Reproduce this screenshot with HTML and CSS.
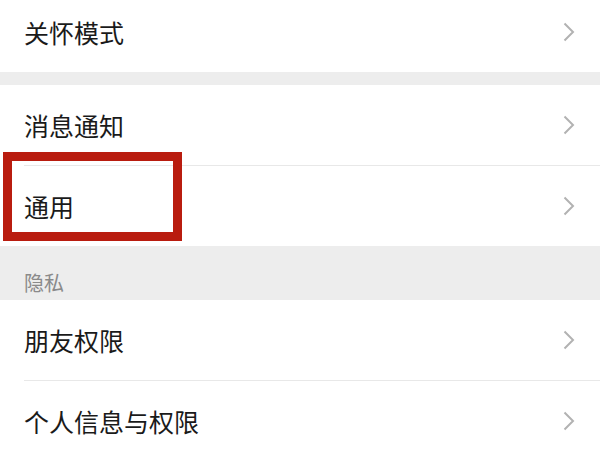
FILE: index.html
```html
<!DOCTYPE html>
<html lang="zh-CN">
<head>
  <meta charset="UTF-8">
  <meta name="viewport" content="width=device-width, initial-scale=1.0">
  <title>设置</title>
  <link rel="stylesheet" href="styles.css">
</head>
<body>
  <div class="settings">
    <div class="group">
      <div class="row">
        <div class="row-inner">
          <span class="label">关怀模式</span>
          <svg class="chevron" width="12" height="20" viewBox="0 0 12 20"><polyline points="1.5,1.5 10,10 1.5,18.5" /></svg>
        </div>
      </div>
    </div>

    <div class="gap"></div>

    <div class="group">
      <div class="row">
        <div class="row-inner">
          <span class="label">消息通知</span>
          <svg class="chevron" width="12" height="20" viewBox="0 0 12 20"><polyline points="1.5,1.5 10,10 1.5,18.5" /></svg>
        </div>
      </div>
      <div class="row">
        <div class="row-inner">
          <span class="label">通用</span>
          <svg class="chevron" width="12" height="20" viewBox="0 0 12 20"><polyline points="1.5,1.5 10,10 1.5,18.5" /></svg>
        </div>
      </div>
    </div>

    <div class="section-title">隐私</div>

    <div class="group">
      <div class="row">
        <div class="row-inner">
          <span class="label">朋友权限</span>
          <svg class="chevron" width="12" height="20" viewBox="0 0 12 20"><polyline points="1.5,1.5 10,10 1.5,18.5" /></svg>
        </div>
      </div>
      <div class="row">
        <div class="row-inner">
          <span class="label">个人信息与权限</span>
          <svg class="chevron" width="12" height="20" viewBox="0 0 12 20"><polyline points="1.5,1.5 10,10 1.5,18.5" /></svg>
        </div>
      </div>
    </div>

    <!-- highlight drawn over the "通用" row -->
    <div class="highlight"></div>
  </div>
</body>
</html>
```

FILE: styles.css
```css
body {
  margin: 0;
  background-color: #ededed;
  font-family: "Noto Sans CJK SC", "Noto Sans", sans-serif;
  overflow: hidden;
}
.settings {
  position: relative;
  margin-top: -8px;
}
.group {
  background-color: #ffffff;
}
.row {
  padding-left: 24px;
}
.row-inner {
  display: flex;
  align-items: center;
  justify-content: space-between;
  height: 80px;
  padding-right: 25px;
  border-bottom: 1px solid #e8e8e8;
}
.row:last-child .row-inner {
  border-bottom: none;
}
.label {
  font-size: 25px;
  line-height: 25px;
  color: #1a1a1a;
}
.chevron {
  display: block;
  fill: none;
  stroke: #b2b2b2;
  stroke-width: 2;
}
.gap {
  height: 13px;
}
.section-title {
  display: flex;
  align-items: flex-end;
  height: 54px;
  padding: 0 0 7px 24px;
  box-sizing: border-box;
  font-size: 20px;
  line-height: 20px;
  color: #8a8a8a;
}
.highlight {
  position: absolute;
  left: 3px;
  top: 160px;
  width: 179px;
  height: 89px;
  box-sizing: border-box;
  border: 9px solid #b91c0f;
}
```
